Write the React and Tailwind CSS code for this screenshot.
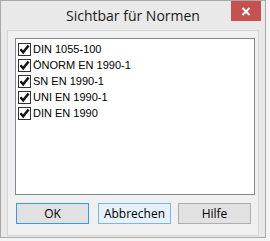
const norms = ['DIN 1055-100', 'ÖNORM EN 1990-1', 'SN EN 1990-1', 'UNI EN 1990-1', 'DIN EN 1990']

function CheckRow({ label }) {
  return (
    <div className="flex items-center h-4">
      <span className="w-[13px] h-[13px] border border-[#333] bg-white flex items-center justify-center shrink-0">
        <svg width="11" height="11" viewBox="0 0 11 11">
          <path d="M1.5 5.2 L4.2 8.3 L9.6 1.6" fill="none" stroke="#111" strokeWidth="2.4" />
        </svg>
      </span>
      <span className="ml-[2px] text-[11px] text-black leading-none">{label}</span>
    </div>
  )
}

function DlgButton({ children, kind }) {
  const styles = {
    default: 'border-[#3399ff] bg-[#e1e1e1]',
    hover: 'border-[#7eb4ea] bg-[#e5f1fb]',
    normal: 'border-[#adadad] bg-[#e1e1e1]',
  }
  return (
    <button
      className={`w-[73px] h-[21px] border text-[12px] text-black flex items-center justify-center ${styles[kind]}`}
      style={{ fontFamily: '"Open Sans", sans-serif' }}
    >
      {children}
    </button>
  )
}

export default function App() {
  return (
    <div className="w-[270px] h-[241px] bg-[#f4f4f4]">
      <div className="w-[266px] h-[238px] border border-[#a9a9a9] bg-[#e9e9e9] flex flex-col">
        <div className="grid grid-cols-[1fr_auto_1fr] h-[29px]">
          <div />
          <div
            className="text-[14px] text-[#1a1a1a] pt-[5px] leading-[20px]"
            style={{ fontFamily: '"Open Sans", sans-serif' }}
          >
            Sichtbar für Normen
          </div>
          <div className="flex justify-end pr-[4px]">
            <div className="w-[30px] h-[20px] bg-[#c75050] flex items-center justify-center">
              <svg width="10" height="9" viewBox="0 0 10 9">
                <path d="M1.5 1 L8.5 8 M8.5 1 L1.5 8" stroke="#fff" strokeWidth="2" />
              </svg>
            </div>
          </div>
        </div>
        <div className="mx-[6px] h-[206px] border border-[#d6d6d6] bg-[#f0f0f0] flex flex-col" style={{ fontFamily: '"Liberation Sans", Arial, sans-serif' }}>
          <div className="ml-[7px] mt-[7px] w-[240px] h-[157px] border border-[#828790] bg-white pl-[2px] pt-[2px] flex flex-col">
            {norms.map((n) => (
              <CheckRow key={n} label={n} />
            ))}
          </div>
          <div className="flex mt-[8px] ml-[8px]">
            <DlgButton kind="default">OK</DlgButton>
            <div className="ml-[9px]">
              <DlgButton kind="hover">Abbrechen</DlgButton>
            </div>
            <div className="ml-[7px]">
              <DlgButton kind="normal">Hilfe</DlgButton>
            </div>
          </div>
        </div>
      </div>
    </div>
  )
}
